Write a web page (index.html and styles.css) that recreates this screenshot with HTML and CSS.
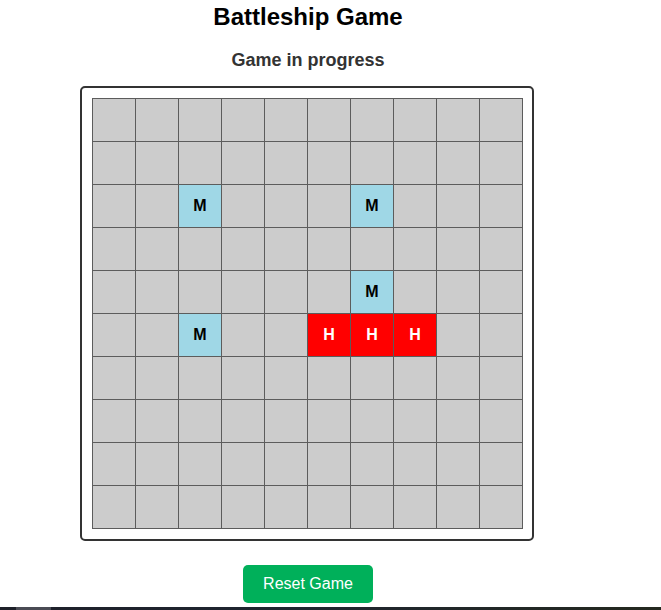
FILE: index.html
```html
<!DOCTYPE html>
<html lang="en">
<head>
<meta charset="utf-8">
<title>Battleship Game</title>
<link rel="stylesheet" href="styles.css">
</head>
<body>
<div class="app">
  <h1 class="title">Battleship Game</h1>
  <h2 class="status">Game in progress</h2>
  <div class="board">
    <div class="grid">
      <div class="cell"></div><div class="cell"></div><div class="cell"></div><div class="cell"></div><div class="cell"></div><div class="cell"></div><div class="cell"></div><div class="cell"></div><div class="cell"></div><div class="cell"></div>
      <div class="cell"></div><div class="cell"></div><div class="cell"></div><div class="cell"></div><div class="cell"></div><div class="cell"></div><div class="cell"></div><div class="cell"></div><div class="cell"></div><div class="cell"></div>
      <div class="cell"></div><div class="cell"></div><div class="cell miss">M</div><div class="cell"></div><div class="cell"></div><div class="cell"></div><div class="cell miss">M</div><div class="cell"></div><div class="cell"></div><div class="cell"></div>
      <div class="cell"></div><div class="cell"></div><div class="cell"></div><div class="cell"></div><div class="cell"></div><div class="cell"></div><div class="cell"></div><div class="cell"></div><div class="cell"></div><div class="cell"></div>
      <div class="cell"></div><div class="cell"></div><div class="cell"></div><div class="cell"></div><div class="cell"></div><div class="cell"></div><div class="cell miss">M</div><div class="cell"></div><div class="cell"></div><div class="cell"></div>
      <div class="cell"></div><div class="cell"></div><div class="cell miss">M</div><div class="cell"></div><div class="cell"></div><div class="cell hit">H</div><div class="cell hit">H</div><div class="cell hit">H</div><div class="cell"></div><div class="cell"></div>
      <div class="cell"></div><div class="cell"></div><div class="cell"></div><div class="cell"></div><div class="cell"></div><div class="cell"></div><div class="cell"></div><div class="cell"></div><div class="cell"></div><div class="cell"></div>
      <div class="cell"></div><div class="cell"></div><div class="cell"></div><div class="cell"></div><div class="cell"></div><div class="cell"></div><div class="cell"></div><div class="cell"></div><div class="cell"></div><div class="cell"></div>
      <div class="cell"></div><div class="cell"></div><div class="cell"></div><div class="cell"></div><div class="cell"></div><div class="cell"></div><div class="cell"></div><div class="cell"></div><div class="cell"></div><div class="cell"></div>
      <div class="cell"></div><div class="cell"></div><div class="cell"></div><div class="cell"></div><div class="cell"></div><div class="cell"></div><div class="cell"></div><div class="cell"></div><div class="cell"></div><div class="cell"></div>
    </div>
  </div>
  <button class="reset" type="button">Reset Game</button>
</div>
<div class="taskbar"><span class="taskbar-item"></span></div>
</body>
</html>
```

FILE: styles.css
```css
html, body {
  margin: 0;
  padding: 0;
  background: #ffffff;
}

body {
  font-family: "Liberation Sans", Arial, sans-serif;
}

.app {
  width: 598px;
  margin-left: 8px;
  display: flex;
  flex-direction: column;
  align-items: center;
}

.title {
  margin: 3px 0 0 2px;
  font-size: 24px;
  line-height: 28px;
  font-weight: bold;
  color: #000;
}

.status {
  margin: 18px 0 0 2px;
  font-size: 18px;
  line-height: 22px;
  font-weight: bold;
  color: #333;
}

.board {
  margin-top: 15px;
  border: 2px solid #333;
  border-radius: 5px;
  padding: 10px 9px 10px 10px;
  background: #fff;
}

.grid {
  display: grid;
  grid-template-columns: repeat(10, 42px);
  grid-auto-rows: 42px;
  gap: 1px;
  padding: 1px;
  background: #5c5c5c;
}

.cell {
  background: #cccccc;
  display: flex;
  align-items: center;
  justify-content: center;
  font-size: 16px;
  font-weight: bold;
  color: #000;
}

.cell.miss {
  background: #9fd7e6;
}

.cell.hit {
  background: #ff0000;
  color: #fff;
}

.reset {
  margin-top: 24px;
  margin-left: 2px;
  width: 130px;
  height: 38px;
  padding: 0;
  border: none;
  border-radius: 5px;
  background: #00b05a;
  color: #fff;
  font-family: "Liberation Sans", Arial, sans-serif;
  font-size: 16px;
  line-height: 18px;
  cursor: pointer;
}

.taskbar {
  position: fixed;
  left: 0;
  right: 0;
  bottom: 0;
  height: 3px;
  background: linear-gradient(90deg, #1e2029 0%, #1f2530 45%, #24291f 100%);
}

.taskbar-item {
  display: block;
  margin-left: 16px;
  width: 35px;
  height: 3px;
  background: #4a4b54;
}
```
